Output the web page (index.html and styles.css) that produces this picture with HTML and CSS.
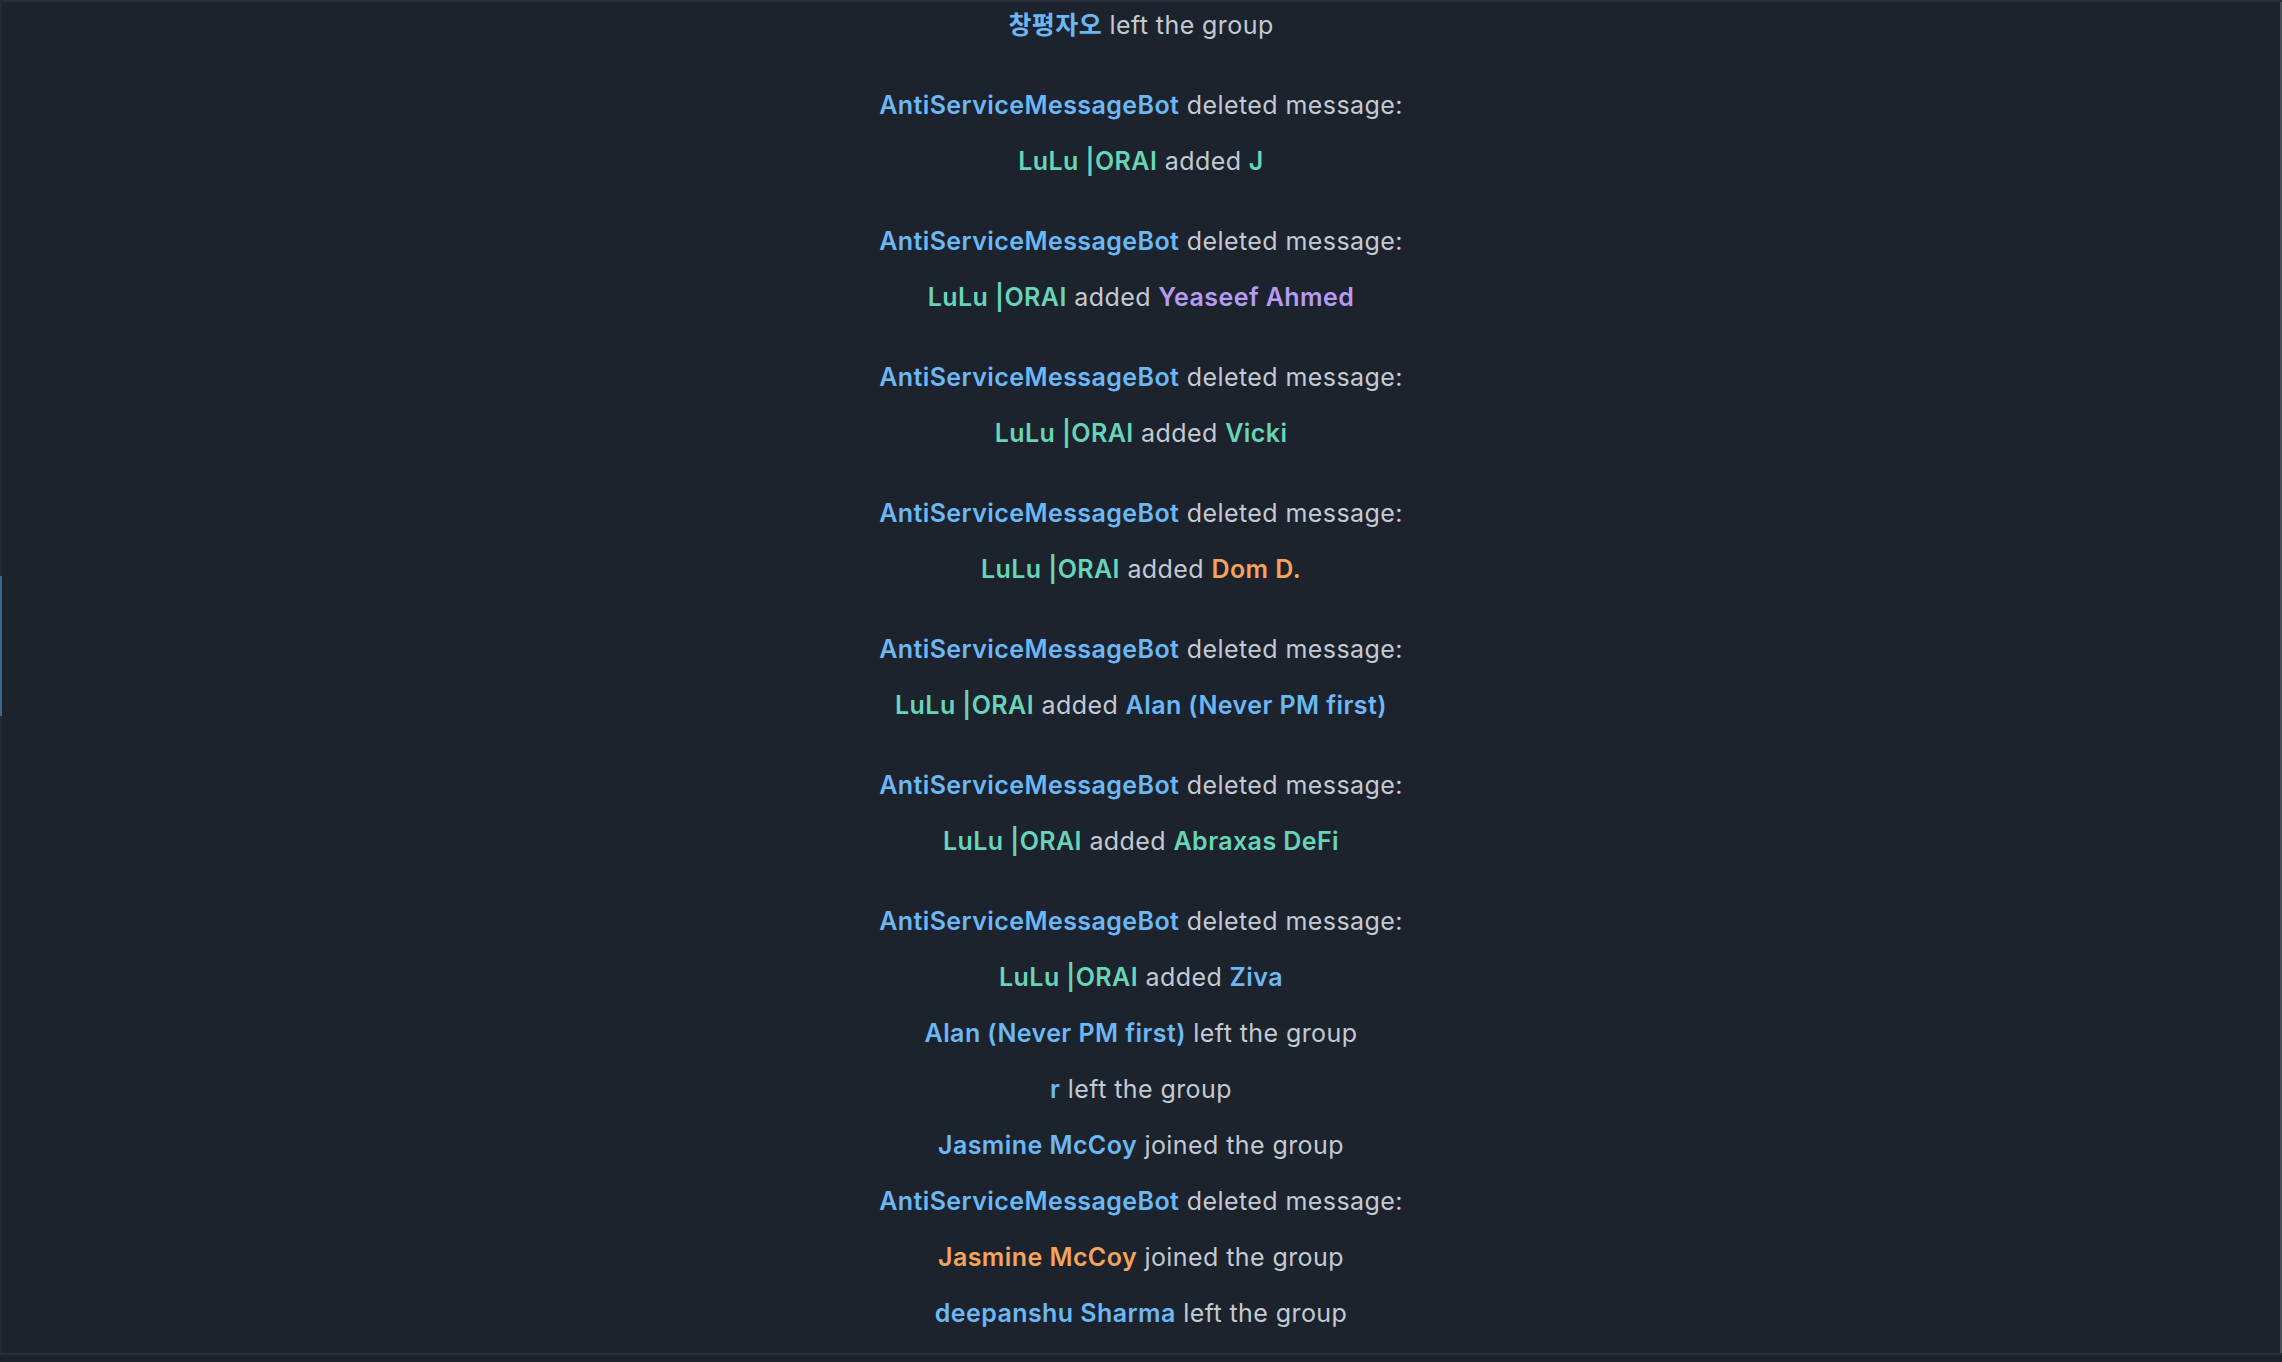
FILE: index.html
```html
<!DOCTYPE html>
<html>
<head>
<meta charset="utf-8">
<link rel="stylesheet" href="styles.css">
</head>
<body>
<div class="frame">
  <div class="top-line"></div>
  <div class="main">
    <div class="left-rail"><div class="rail-marker"></div></div>
    <div class="content">
      <div class="list">
        <div class="item"><span class="name blue">창평자오</span> left the group</div>
        <div class="item gap"><span class="name blue">AntiServiceMessageBot</span> deleted message:</div>
        <div class="item"><span class="name teal">LuLu |ORAI</span> added <span class="name teal">J</span></div>
        <div class="item gap"><span class="name blue">AntiServiceMessageBot</span> deleted message:</div>
        <div class="item"><span class="name teal">LuLu |ORAI</span> added <span class="name purple">Yeaseef Ahmed</span></div>
        <div class="item gap"><span class="name blue">AntiServiceMessageBot</span> deleted message:</div>
        <div class="item"><span class="name teal">LuLu |ORAI</span> added <span class="name teal">Vicki</span></div>
        <div class="item gap"><span class="name blue">AntiServiceMessageBot</span> deleted message:</div>
        <div class="item"><span class="name teal">LuLu |ORAI</span> added <span class="name orange">Dom D.</span></div>
        <div class="item gap"><span class="name blue">AntiServiceMessageBot</span> deleted message:</div>
        <div class="item"><span class="name teal">LuLu |ORAI</span> added <span class="name blue">Alan (Never PM first)</span></div>
        <div class="item gap"><span class="name blue">AntiServiceMessageBot</span> deleted message:</div>
        <div class="item"><span class="name teal">LuLu |ORAI</span> added <span class="name teal">Abraxas DeFi</span></div>
        <div class="item gap"><span class="name blue">AntiServiceMessageBot</span> deleted message:</div>
        <div class="item"><span class="name teal">LuLu |ORAI</span> added <span class="name blue">Ziva</span></div>
        <div class="item"><span class="name blue">Alan (Never PM first)</span> left the group</div>
        <div class="item"><span class="name blue">r</span> left the group</div>
        <div class="item"><span class="name blue">Jasmine McCoy</span> joined the group</div>
        <div class="item"><span class="name blue">AntiServiceMessageBot</span> deleted message:</div>
        <div class="item"><span class="name orange">Jasmine McCoy</span> joined the group</div>
        <div class="item"><span class="name blue">deepanshu Sharma</span> left the group</div>
      </div>
    </div>
    <div class="right-rail"></div>
  </div>
  <div class="bottom-line"></div>
  <div class="bottom-strip"></div>
</div>
</body>
</html>
```

FILE: styles.css
```css
html, body {
  margin: 0;
  padding: 0;
  background: #1c232d;
}
.frame {
  width: 2282px;
  height: 1362px;
  display: flex;
  flex-direction: column;
  overflow: hidden;
  font-family: Inter, "Noto Sans CJK KR", sans-serif;
}
.top-line {
  height: 2px;
  background: #252e3a;
  flex: none;
}
.main {
  flex: 1;
  display: flex;
  min-height: 0;
}
.left-rail {
  width: 2px;
  background: #232b36;
  position: relative;
  flex: none;
}
.rail-marker {
  position: absolute;
  left: 0;
  top: 574px;
  width: 2px;
  height: 140px;
  background: #3d6690;
}
.right-rail {
  width: 2px;
  background: #4a5059;
  flex: none;
}
.content {
  flex: 1;
  overflow: hidden;
}
.list {
  margin-top: -5px;
  display: flex;
  flex-direction: column;
  align-items: center;
}
.item {
  line-height: 56px;
  font-size: 25px;
  letter-spacing: 0.42px;
  color: #c3cad3;
  white-space: nowrap;
}
.item.gap {
  margin-top: 24px;
}
.name {
  font-weight: 600;
}
.blue { color: #6cb8f5; }
.teal { color: #68d4b8; }
.purple { color: #b79af2; }
.orange { color: #f5a45d; }
.bottom-line {
  height: 2px;
  background: #263140;
  flex: none;
}
.bottom-strip {
  height: 7px;
  background: #1b222b;
  flex: none;
}
```
